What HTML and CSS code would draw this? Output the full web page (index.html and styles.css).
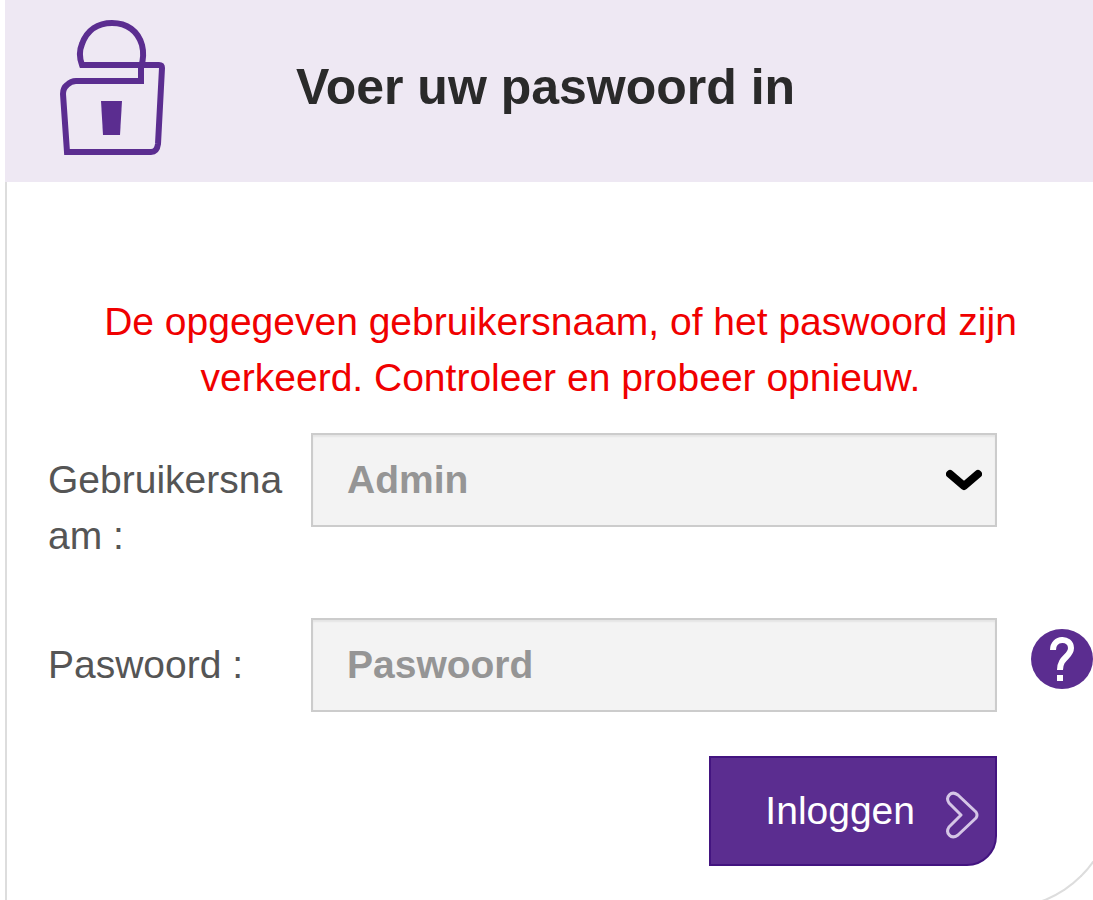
FILE: index.html
```html
<!DOCTYPE html>
<html lang="nl">
<head>
    <meta charset="UTF-8">
    <meta name="viewport" content="width=device-width, initial-scale=1.0">
    <title>Inloggen</title>
    <link rel="stylesheet" href="styles.css">
</head>
<body>
    <div class="panel">
        <header class="panel-header">
            <svg class="lock" viewBox="0 0 108 140" fill="none" stroke="#5b2d90" stroke-width="6" aria-hidden="true">
                <path d="M24 48C21 40 21 34 24 27C29 13 40 6 54 6C69 6 80 14 84 28C86 36 85 44 83 50V64H18Q13 64 9 68Q5 71 5 77L9 135H93Q99 135 100 127L104 51Q104 48 101 48H24Z"/>
                <path d="M43 84H64L62 118H45Z" fill="#5b2d90" stroke="none"/>
            </svg>
            <h1>Voer uw paswoord in</h1>
        </header>
        <form class="panel-body">
            <p class="error">De opgegeven gebruikersnaam, of het paswoord zijn verkeerd. Controleer en probeer opnieuw.</p>
            <div class="row">
                <label for="username">Gebruikersnaam :</label>
                <div class="select-box">
                    <select id="username">
                        <option>Admin</option>
                    </select>
                    <svg class="arrow" viewBox="0 0 36 24" fill="none" stroke="#000" stroke-width="8" stroke-linecap="round" stroke-linejoin="round" aria-hidden="true">
                        <path d="M4 6L18 18L32 6"/>
                    </svg>
                </div>
            </div>
            <div class="row">
                <label for="password">Paswoord :</label>
                <input type="password" id="password" placeholder="Paswoord">
                <button type="button" class="help" aria-label="Help">
                    <svg viewBox="0 0 62 60" aria-hidden="true">
                        <ellipse cx="31" cy="30" rx="31" ry="30" fill="#5b2d90"/>
                        <path d="M22 21C22 8 40 8 40 19C40 28 29 28 29 41" fill="none" stroke="#fff" stroke-width="6"/>
                        <rect x="26" y="46" width="6" height="6" fill="#fff"/>
                    </svg>
                </button>
            </div>
            <div class="row">
                <button type="submit" class="login">
                    Inloggen
                    <svg viewBox="0 -8 34 56" fill="none" stroke="#d5c6e6" stroke-width="3" stroke-linejoin="round" aria-hidden="true">
                        <path d="M4 12C0 6 6 -1 13 4L31 21Q33 24 31 27L13 44C6 49 0 42 4 36L16 24Z"/>
                    </svg>
                </button>
            </div>
        </form>
    </div>
</body>
</html>
```
FILE: styles.css
```css
* {
    box-sizing: border-box;
}

body {
    font-family: "Liberation Sans", Arial, sans-serif;
    font-size: 39px;
    line-height: 56px;
    color: #555;
    background-color: #fff;
    margin: 0;
    overflow: hidden;
}

/* the panel runs past the right edge of the window */
.panel {
    margin: 0 -21px 0 5px;
}

.panel-header {
    display: flex;
    align-items: center;
    gap: 130px;
    height: 182px;
    padding: 0 53px 8px;
    background-color: #eee8f3;
}

.lock {
    width: 108px;
    height: 140px;
}

h1 {
    margin: 0;
    font-size: 50px;
    color: #2a2a2a;
}

.panel-body {
    padding: 112px 19px 41px 41px;
    border: 2px solid #ddd;
    border-top: none;
    border-bottom-right-radius: 110px;
}

.error {
    margin: 0 60px 27px 40px;
    text-align: center;
    color: #f00000;
}

.row {
    display: grid;
    grid-template-columns: 235px 1fr 68px;
    column-gap: 28px;
    align-items: start;
}

.row + .row {
    margin-top: 54px;
}

.row:last-child {
    margin-top: 44px;
}

label {
    padding-top: 19px;
    overflow-wrap: anywhere;
}

.select-box {
    position: relative;
}

select,
input {
    display: block;
    width: 100%;
    height: 94px;
    padding: 0 34px;
    font: inherit;
    font-weight: bold;
    color: #959595;
    background-color: #f3f3f3;
    border: 2px solid #ccc;
    border-radius: 0;
    box-shadow: inset 0 2px 2px rgba(0, 0, 0, 0.06);
    appearance: none;
}

input::placeholder {
    color: #959595;
}

.arrow {
    position: absolute;
    right: 15px;
    top: 35px;
    width: 36px;
    height: 24px;
    pointer-events: none;
}

button {
    font: inherit;
    border: none;
    cursor: pointer;
}

.help {
    justify-self: end;
    padding: 11px 0 0;
    background: none;
}

.help svg {
    display: block;
    width: 62px;
    height: 60px;
}

.login {
    grid-column: 2;
    justify-self: end;
    display: flex;
    align-items: center;
    gap: 30px;
    height: 110px;
    padding: 0 16px 0 54px;
    color: #fff;
    background-color: #5b2d90;
    border: 2px solid #431480;
    border-bottom-right-radius: 30px;
}

.login svg {
    width: 34px;
    height: 56px;
}
```
